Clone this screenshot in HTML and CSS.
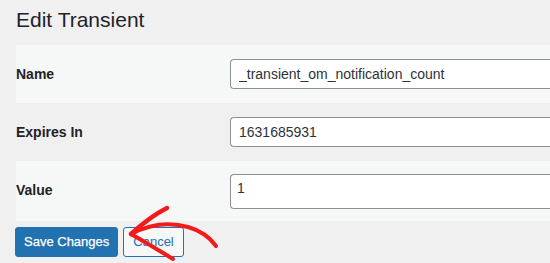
FILE: index.html
```html
<!DOCTYPE html>
<html lang="en">
<head>
<meta charset="utf-8">
<title>Edit Transient</title>
<link rel="stylesheet" href="styles.css">
</head>
<body>
<div class="wrap">
  <h1 class="page-title">Edit Transient</h1>
  <form class="edit-form">
    <table class="form-table">
      <tbody>
        <tr class="row row-alt">
          <th class="label">Name</th>
          <td class="field"><input class="text-input" type="text" value="_transient_om_notification_count"></td>
        </tr>
        <tr class="row">
          <th class="label">Expires In</th>
          <td class="field"><input class="text-input" type="text" value="1631685931"></td>
        </tr>
        <tr class="row row-alt">
          <th class="label">Value</th>
          <td class="field field-area"><textarea class="text-area">1</textarea></td>
        </tr>
      </tbody>
    </table>
    <div class="actions">
      <button type="button" class="btn btn-primary">Save Changes</button>
      <button type="button" class="btn btn-secondary">Cancel</button>
    </div>
  </form>
</div>
<svg class="annotation" width="550" height="263" viewBox="0 0 550 263" aria-hidden="true">
  <g fill="none" stroke="#f41a1a" stroke-linecap="round" stroke-linejoin="round">
    <path d="M131 234 C150 224 170 222 188 227 C202 231 211 239 216 246" stroke-width="4"/>
    <path d="M131 234 C142 224 155 214 167 208" stroke-width="4.5"/>
    <path d="M131 234 C145 242 160 251 173 259" stroke-width="4"/>
  </g>
</svg>
</body>
</html>
```

FILE: styles.css
```css
html, body {
  margin: 0;
  padding: 0;
}
body {
  background: #f0f0f1;
  color: #1d2327;
  font-family: "Liberation Sans", Arial, sans-serif;
  font-size: 14px;
  width: 550px;
  height: 263px;
  overflow: hidden;
  position: relative;
}
.wrap {
  padding-left: 16px;
  overflow: hidden;
}
.page-title {
  margin: 6px 0 12px;
  font-size: 21px;
  line-height: 27px;
  font-weight: 400;
  color: #1d2327;
}
.form-table {
  border-collapse: collapse;
  width: 534px;
  table-layout: fixed;
}
.row-alt {
  background: #f6f7f7;
}
.label {
  width: 214px;
  padding: 20px 0 0 0;
  text-align: left;
  vertical-align: top;
  font-weight: 700;
  font-size: 14px;
  line-height: 18.2px;
  height: 38px;
  box-sizing: content-box;
}
.field {
  padding: 14px 0 14px 0;
  vertical-align: top;
  overflow: hidden;
}
.field-area {
  padding: 13px 0 12px 0;
}
.text-input,
.text-area {
  display: block;
  box-sizing: border-box;
  width: calc(100% + 8px);
  border: 1px solid #8c8f94;
  border-right: 0;
  border-radius: 4px 0 0 4px;
  background: #fff;
  color: #2c3338;
  font-family: "Liberation Sans", Arial, sans-serif;
  font-size: 14px;
  margin: 0;
}
.text-input {
  height: 30px;
  padding: 0 8px;
  line-height: 28px;
}
.text-area {
  height: 35px;
  padding: 3px 6px;
  line-height: 20px;
  resize: none;
}
.actions {
  display: flex;
  gap: 5px;
  margin-top: 6px;
  margin-left: -1px;
}
.btn {
  box-sizing: border-box;
  height: 30px;
  border-radius: 3px;
  font-family: "Liberation Sans", Arial, sans-serif;
  font-size: 13px;
  line-height: 28px;
  padding: 0 9px;
  margin: 0;
  cursor: pointer;
}
.btn-primary {
  background: #2271b1;
  border: 1px solid #2271b1;
  color: #fff;
  padding: 0 8px;
  -webkit-text-stroke: 0.25px #fff;
}
.btn-secondary {
  background: #f6f7f7;
  border: 1px solid #2271b1;
  color: #2271b1;
}
.annotation {
  position: absolute;
  left: 0;
  top: 0;
  pointer-events: none;
}
```
